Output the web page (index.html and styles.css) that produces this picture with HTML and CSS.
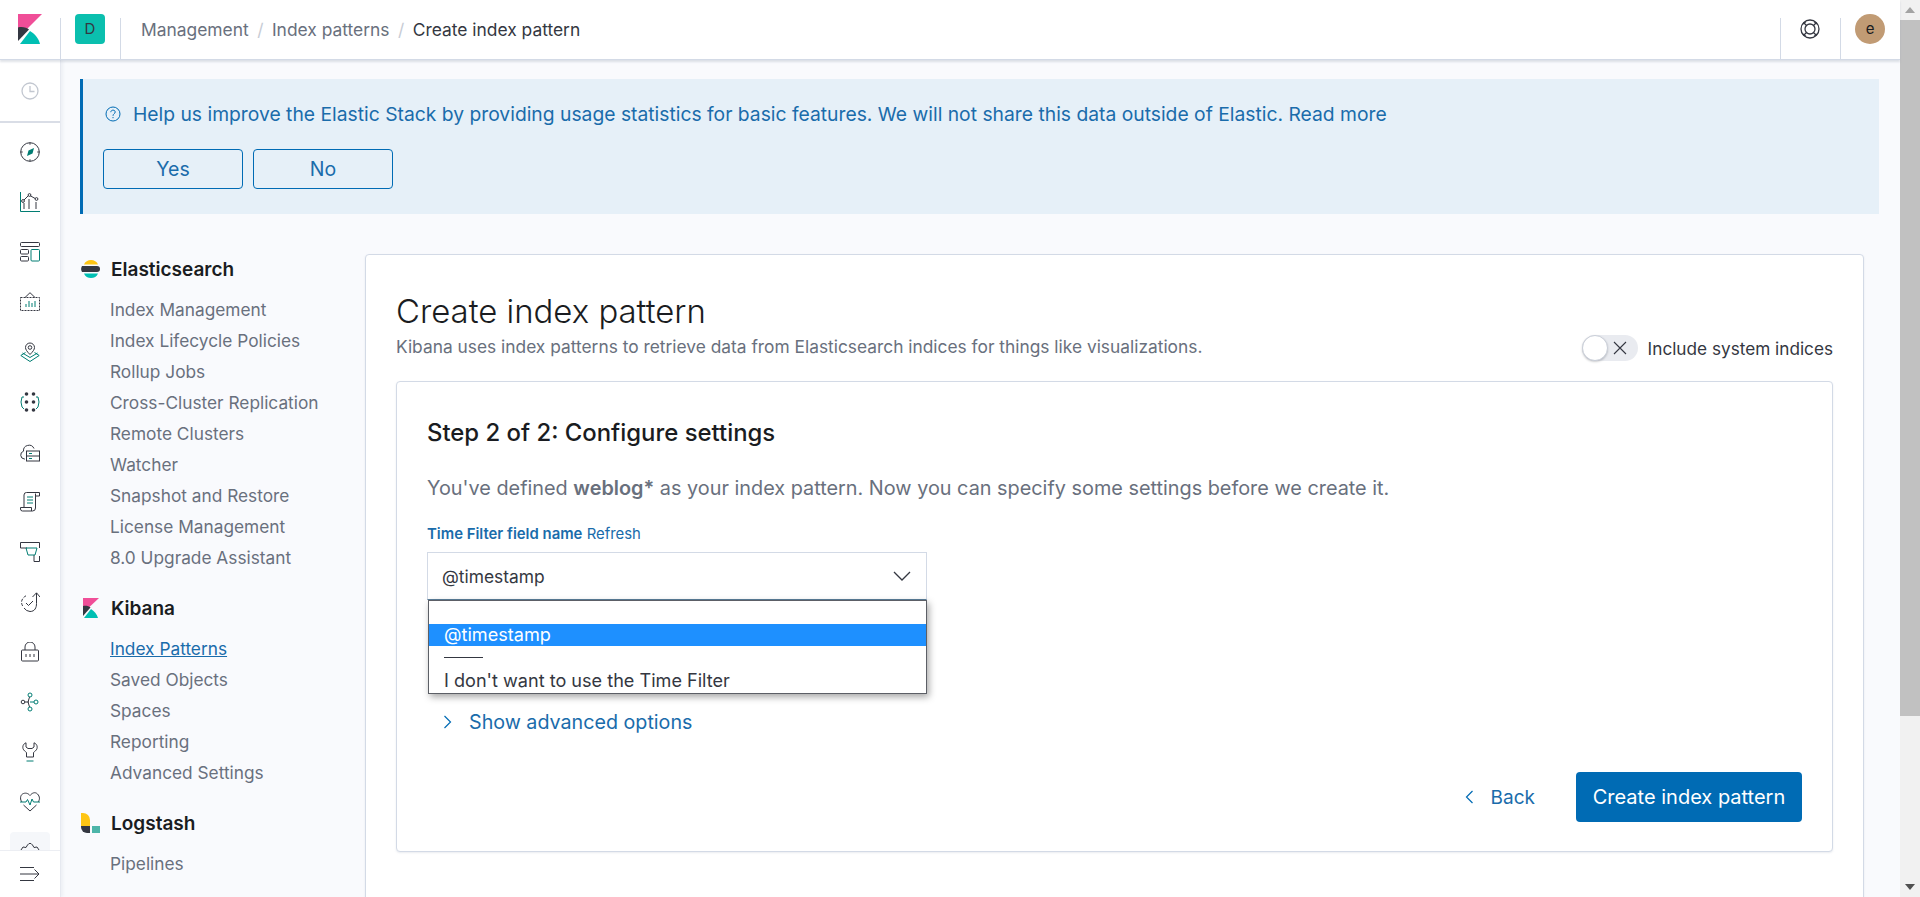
FILE: index.html
```html
<!DOCTYPE html>
<html lang="en">
<head>
    <meta charset="UTF-8">
    <title>Create index pattern</title>
    <link rel="stylesheet" href="styles.css">
</head>
<body>
<div class="page">
    <div class="app">
        <header class="topbar">
            <div class="logo-cell">
                <svg width="24" height="30" viewBox="0 0 24 30"><path fill="#f04e98" d="M0 0h24L0 24z"/><path fill="#343741" d="M0 13.500c4-1 9 0 11 2L0 27z"/><path fill="#00bfb3" d="M2 30l10-13c5 3 9 8 10 13z"/></svg>
            </div>
            <div class="space-cell"><span class="space-badge">D</span></div>
            <nav class="crumbs">
                <span>Management</span><i>/</i><span>Index patterns</span><i>/</i><b>Create index pattern</b>
            </nav>
            <div class="head-cell">
                <svg width="20" height="20" viewBox="0 0 20 20" fill="none" stroke="#343741" stroke-width="1.300"><circle cx="10" cy="10" r="9"/><circle cx="10" cy="10" r="5"/><path d="M3.500 3.500L6.500 6.500M16.500 3.500L13.500 6.500M3.500 16.500L6.500 13.500M16.500 16.500L13.500 13.500M6 2.500L3 5M14 2.500L17 5M6 17.500L3 15M14 17.500L17 15"/></svg>
            </div>
            <div class="head-cell"><span class="avatar">e</span></div>
        </header>
        <div class="below">
            <aside class="rail">
                <div class="recent">
                    <svg width="20" height="20" viewBox="0 0 20 20" fill="none" stroke="#c2c7d0" stroke-width="1.300"><circle cx="10" cy="10" r="8"/><path d="M10 5v5.500h4.500"/></svg>
                </div>
                <div class="rail-items">
                    <a class="rail-item"><svg width="20" height="20" viewBox="0 0 20 20" fill="none"><circle class="ink" cx="10" cy="10" r="9.300"/><path class="ink" d="M10 .700v2M10 17.300v2M.700 10h2M17.300 10h2"/><path fill="#017d73" d="M14 6l-1.500 5.500L7 14l1.500-5.500z"/></svg></a>
                    <a class="rail-item"><svg width="20" height="20" viewBox="0 0 20 20" fill="none"><path class="teal" d="M.500 0v19.500h19.500"/><path class="ink" d="M3 9l6-6 7 4M4 11v6M9 7v10M16 10v7"/><circle class="ink fill" cx="3" cy="9" r="1.400"/><circle class="ink fill" cx="9.500" cy="3" r="1.400"/><circle class="ink fill" cx="16.500" cy="7" r="1.400"/></svg></a>
                    <a class="rail-item"><svg width="20" height="20" viewBox="0 0 20 20" fill="none"><rect class="ink" x=".500" y=".500" width="19" height="4" rx="1"/><rect class="ink" x=".500" y="7.500" width="8" height="4.500" rx="1"/><rect class="ink" x=".500" y="14.500" width="8" height="4.500" rx="1"/><rect class="teal" x="11" y="7.500" width="8.500" height="11.500" rx="1"/></svg></a>
                    <a class="rail-item"><svg width="20" height="20" viewBox="0 0 20 20" fill="none"><path class="ink" stroke-dasharray="2 1" d="M.500 5.500h19v13H.500z"/><path class="ink" d="M5 5.500L10 .700l5 4.800"/><path class="teal" stroke-width="1.500" d="M6 15v-3M9 15V9M12 15v-4M15 15V9"/></svg></a>
                    <a class="rail-item"><svg width="20" height="20" viewBox="0 0 20 20" fill="none"><path class="ink" d="M10 12.500C7 9.500 5.500 7.500 5.500 5.500a4.500 4.500 0 0 1 9 0c0 2-1.500 4-4.500 7z"/><circle class="ink" cx="10" cy="5.500" r="1.800"/><path class="teal" d="M5.500 10.500L.800 13.500 10 19.500l9.200-6-4.700-3"/><path class="teal" d="M2.500 11l7.500 4.500 7.500-4.500"/></svg></a>
                    <a class="rail-item"><svg width="20" height="20" viewBox="0 0 20 20" fill="none"><g fill="#343741"><circle cx="6.500" cy="2" r="1.800"/><circle cx="13.500" cy="2" r="1.800"/><circle cx="6.500" cy="10" r="1.800"/><circle cx="13.500" cy="10" r="1.800"/><circle cx="6.500" cy="18" r="1.800"/><circle cx="13.500" cy="18" r="1.800"/></g><path class="teal" stroke-width="1.300" d="M4 5H2l-1 5 1 5 2 2M16 5h2l1 5-1 5-2 2"/></svg></a>
                    <a class="rail-item"><svg width="20" height="20" viewBox="0 0 20 20" fill="none"><path class="ink" d="M5 17H4.500A4 4 0 0 1 3.500 9.200 5.500 5.500 0 0 1 14 6.500"/><rect class="ink" x="6.500" y="9" width="13" height="10"/><path class="ink" d="M6.500 14h13"/><path class="teal" d="M9 11.500h3M9 16.500h3"/></svg></a>
                    <a class="rail-item"><svg width="20" height="20" viewBox="0 0 20 20" fill="none"><path class="ink" d="M4 15.500V3a2.500 2.500 0 0 1 2.500-2.500H19.500V4H15.500M15.500 1.500V16a3 3 0 0 1-3 3H2.500A2 2 0 0 1 .500 17v-1.500h11V19"/><path class="teal" d="M7 5h6M7 8h6M7 11h6"/></svg></a>
                    <a class="rail-item"><svg width="20" height="20" viewBox="0 0 20 20" fill="none"><path class="ink" d="M7 6H.500V.500h19V6M14 13v6.500H19.500V14"/><path class="teal" d="M6 6h11l-2 7H8z"/></svg></a>
                    <a class="rail-item"><svg width="20" height="20" viewBox="0 0 20 20" fill="none"><path class="ink" stroke-dasharray="3 1.500" d="M6 3.800A8 8 0 0 0 1.500 10 8 8 0 0 0 3 14.500"/><path class="ink" d="M4 16a8 8 0 0 0 6 3.500c5 0 6.500-4 6.500-8V1M12.500 5L16.500 .800 20 5"/><path class="ink" d="M6 11l2.500 2.500L13 9"/></svg></a>
                    <a class="rail-item"><svg width="20" height="20" viewBox="0 0 20 20" fill="none"><rect class="ink" x="1.500" y="8" width="17" height="11" rx="1"/><path class="ink" d="M5 8V5a5 5 0 0 1 10 0v3"/><path class="ink" d="M6 12v3M10 12v3M14 12v3"/></svg></a>
                    <a class="rail-item"><svg width="20" height="20" viewBox="0 0 20 20" fill="none"><path class="ink" d="M4 10h5M10 3.500L8 10l2 6.500"/><circle class="ink fill" cx="3" cy="10" r="1.800"/><circle class="teal fill" cx="10" cy="3" r="2"/><circle class="teal fill" cx="16" cy="10" r="2"/><circle class="teal fill" cx="10" cy="17" r="2"/><path class="teal" d="M10 10h4"/></svg></a>
                    <a class="rail-item"><svg width="20" height="20" viewBox="0 0 20 20" fill="none"><path class="ink" d="M6 .800C3 2 2.500 4.500 3 6.500c.5 2 2.500 3 3.500 4v4.500h7V10.500c1-1 3-2 3.500-4 .5-2 0-4.500-3-5.700V5l-2 1.500H8L6 5z"/><path class="teal" stroke-width="1.300" d="M6.500 19h7"/></svg></a>
                    <a class="rail-item"><svg width="20" height="20" viewBox="0 0 20 20" fill="none"><path class="ink" d="M2 10C0 8 0 3.500 2.500 2c2.500-1.500 5.500-1 7.500 1.500C12 1 15-.500 17.500 2c2.500 2.500 2.500 6 .5 8M3.500 13l6.500 6 6.500-6"/><path class="teal" d="M0 10h6l1.500-2.500L10 13l2-6 1.500 3H20"/></svg></a>
                    <a class="rail-item current"><svg width="20" height="20" viewBox="0 0 20 20" fill="none"><path class="ink" d="M1 8l2-3 3 .500L7.500 3 9 1.500h2L12.500 3 14 5.500l3-.500 2 3"/></svg></a>
                </div>
                <div class="collapse">
                    <svg width="20" height="16" viewBox="0 0 20 16" fill="none"><path class="ink" d="M0 1.500h14M0 8h19M0 14.500h14M14.500 3.500L19 8l-4.500 4.500"/></svg>
                </div>
            </aside>
            <main class="content">
                <div class="callout">
                    <p class="callout-title">
                        <svg width="16" height="16" viewBox="0 0 16 16" fill="none" stroke="#006bb4" stroke-width="1"><circle cx="8" cy="8" r="7"/><path d="M5.800 6.200C5.800 3.500 10.200 3.500 10.200 6c0 1.800-2.200 1.700-2.200 3.800"/><path d="M8 11v1.200"/></svg>
                        Help us improve the Elastic Stack by providing usage statistics for basic features. We will not share this data outside of Elastic. Read more
                    </p>
                    <div class="callout-btns">
                        <button class="btn-line">Yes</button>
                        <button class="btn-line">No</button>
                    </div>
                </div>
                <div class="mgmt">
                    <nav class="side">
                        <h3 class="side-title">
                            <svg class="side-icon" width="20" height="18" viewBox="0 0 20 18"><path fill="#fec514" d="M3 4.500C4 1.500 7 0 10 0s6 1.500 7 4.500z"/><path fill="#343741" d="M1 6h15a3 3 0 0 1 0 6H1a6 6 0 0 1 0-6z"/><path fill="#00bfb3" d="M3 13.500h14C16 16.500 13 18 10 18s-6-1.500-7-4.500z"/></svg>
                            Elasticsearch
                        </h3>
                        <ul class="side-list">
                            <li>Index Management</li>
                            <li>Index Lifecycle Policies</li>
                            <li>Rollup Jobs</li>
                            <li>Cross-Cluster Replication</li>
                            <li>Remote Clusters</li>
                            <li>Watcher</li>
                            <li>Snapshot and Restore</li>
                            <li>License Management</li>
                            <li>8.0 Upgrade Assistant</li>
                        </ul>
                        <h3 class="side-title">
                            <svg class="side-icon" width="20" height="20" viewBox="0 0 16 20"><path fill="#f04e98" d="M0 0h16L0 15z"/><path fill="#343741" d="M0 8c3-.500 6 0 7.500 1.500L0 18z"/><path fill="#00bfb3" d="M1 20l7-9c3 2 6 5 7 9z"/></svg>
                            Kibana
                        </h3>
                        <ul class="side-list">
                            <li class="active">Index Patterns</li>
                            <li>Saved Objects</li>
                            <li>Spaces</li>
                            <li>Reporting</li>
                            <li>Advanced Settings</li>
                        </ul>
                        <h3 class="side-title">
                            <svg class="side-icon" width="20" height="20" viewBox="0 0 20 20"><path fill="#fec514" d="M0 0h2a7 7 0 0 1 7 7v6H0z"/><path fill="#343741" d="M0 13h9v7H6a6 6 0 0 1-6-6z"/><rect fill="#4db5a9" x="11" y="13" width="8" height="7"/></svg>
                            Logstash
                        </h3>
                        <ul class="side-list">
                            <li>Pipelines</li>
                        </ul>
                    </nav>
                    <section class="panel">
                        <div class="panel-head">
                            <div>
                                <h1 class="panel-title">Create index pattern</h1>
                                <p class="panel-sub">Kibana uses index patterns to retrieve data from Elasticsearch indices for things like visualizations.</p>
                            </div>
                            <div class="switch-wrap">
                                <span class="switch">
                                    <span class="knob"></span>
                                    <svg width="14" height="14" viewBox="0 0 14 14" fill="none" stroke="#343741" stroke-width="1.100"><path d="M1 1l12 12M13 1L1 13"/></svg>
                                </span>
                                Include system indices
                            </div>
                        </div>
                        <div class="step">
                            <h2 class="step-title">Step 2 of 2: Configure settings</h2>
                            <p class="step-text">You've defined <b>weblog*</b> as your index pattern. Now you can specify some settings before we create it.</p>
                            <div class="field-label"><b>Time Filter field name</b> <a>Refresh</a></div>
                            <div class="select-wrap">
                                <div class="select">
                                    @timestamp
                                    <svg width="18" height="10" viewBox="0 0 18 10" fill="none" stroke="#343741" stroke-width="1.300"><path d="M1 1l8 8 8-8"/></svg>
                                </div>
                                <ul class="dropdown">
                                    <li class="blank"></li>
                                    <li class="picked">@timestamp</li>
                                    <li class="sep"><span></span></li>
                                    <li class="plain">I don't want to use the Time Filter</li>
                                </ul>
                            </div>
                            <a class="advanced">
                                <svg width="10" height="16" viewBox="0 0 10 16" fill="none" stroke="#006bb4" stroke-width="1.200"><path d="M1.500 2l6 6-6 6"/></svg>
                                Show advanced options
                            </a>
                            <div class="step-foot">
                                <a class="back">
                                    <svg width="10" height="16" viewBox="0 0 10 16" fill="none" stroke="#006bb4" stroke-width="1.200"><path d="M8.500 2l-6 6 6 6"/></svg>
                                    Back
                                </a>
                                <button class="btn-fill">Create index pattern</button>
                            </div>
                        </div>
                    </section>
                </div>
            </main>
        </div>
    </div>
    <div class="scrollbar">
        <span class="arrow up"></span>
        <span class="thumb"></span>
        <span class="arrow down"></span>
    </div>
</div>
</body>
</html>
```

FILE: styles.css
```css
* {
    box-sizing: border-box;
}

html, body {
    margin: 0;
    height: 100%;
    overflow: hidden;
}

body {
    font-family: Inter, "Liberation Sans", sans-serif;
    font-size: 17.2px;
    color: #343741;
    background-color: #f9fafd;
}

h1, h2, h3, p, ul {
    margin: 0;
    padding: 0;
    list-style: none;
}

.page {
    display: flex;
    height: 897px;
}

.app {
    flex: 1;
    min-width: 0;
    display: flex;
    flex-direction: column;
}

/* top bar */
.topbar {
    height: 60px;
    flex: none;
    display: flex;
    align-items: stretch;
    background-color: #fff;
    border-bottom: 1px solid #d3dae6;
    box-shadow: 0 2px 2px rgba(152, 162, 179, 0.3);
    position: relative;
    z-index: 2;
}

.logo-cell {
    width: 60px;
    display: flex;
    align-items: center;
    justify-content: center;
    padding-bottom: 1px;
}

.space-cell {
    width: 60px;
    display: flex;
    align-items: center;
    justify-content: center;
    padding-bottom: 1px;
    background: linear-gradient(#d3dae6, #d3dae6) left 18px / 1px 100% no-repeat;
}

.space-badge {
    width: 30px;
    height: 30px;
    border-radius: 4px;
    background-color: #0bbfae;
    color: #343741;
    font-size: 15px;
    line-height: 30px;
    text-align: center;
}

.crumbs {
    flex: 1;
    display: flex;
    align-items: center;
    padding-left: 21px;
    padding-bottom: 1px;
    font-size: 17.4px;
    color: #69707d;
    background: linear-gradient(#d3dae6, #d3dae6) left 18px / 1px 100% no-repeat;
}

.crumbs i {
    font-style: normal;
    color: #c7ccd5;
    margin: 0 8.500px;
}

.crumbs b {
    font-weight: 400;
    color: #343741;
}

.head-cell {
    width: 60px;
    display: flex;
    align-items: center;
    justify-content: center;
    padding-bottom: 1px;
    background: linear-gradient(#d3dae6, #d3dae6) left 18px / 1px 100% no-repeat;
}

.avatar {
    width: 30px;
    height: 30px;
    border-radius: 50%;
    background-color: #c19b74;
    color: #1a1c21;
    font-size: 15px;
    line-height: 30px;
    text-align: center;
}

.below {
    flex: 1;
    min-height: 0;
    display: flex;
}

/* icon rail */
.rail {
    width: 61px;
    flex: none;
    display: flex;
    flex-direction: column;
    background-color: #fff;
    border-right: 1px solid #e6e9f0;
    box-shadow: 2px 0 3px rgba(152, 162, 179, 0.12);
}

.recent {
    height: 63px;
    flex: none;
    display: flex;
    align-items: center;
    justify-content: center;
    border-bottom: 2px solid #d9dde6;
}

.rail-items {
    flex: 1;
    min-height: 0;
    overflow: hidden;
    padding-top: 4px;
}

.rail-item {
    height: 50px;
    display: flex;
    align-items: center;
    justify-content: center;
    margin: 0 10px;
    border-radius: 4px;
}

.rail-item.current {
    height: 40px;
    margin: 5px 10px;
    background-color: #f5f7fa;
}

.ink {
    stroke: #343741;
    stroke-width: 1;
}

.teal {
    stroke: #017d73;
    stroke-width: 1;
}

.fill {
    fill: #fff;
}

.collapse {
    height: 47px;
    flex: none;
    display: flex;
    align-items: center;
    justify-content: center;
    border-top: 1px solid #eceef3;
    background-color: #fff;
}

/* main area */
.content {
    flex: 1;
    min-width: 0;
    overflow: hidden;
    padding: 19px 21px 0 19px;
}

.callout {
    height: 135px;
    padding: 23px 20px 0 20px;
    background-color: #e6f0f8;
    border-left: 3px solid #006bb4;
}

.callout-title {
    display: flex;
    align-items: center;
    gap: 12px;
    height: 24px;
    padding-left: 2px;
    font-size: 19.3px;
    color: #1a6cab;
}

.callout-btns {
    display: flex;
    gap: 10px;
    margin-top: 23px;
}

.btn-line {
    width: 140px;
    height: 40px;
    border: 1px solid #006bb4;
    border-radius: 4px;
    background: transparent;
    color: #1a6cab;
    font: inherit;
    font-size: 19.5px;
}

.mgmt {
    display: flex;
    margin-top: 40px;
    align-items: flex-start;
}

.side {
    width: 285px;
    flex: none;
}

.side-title {
    display: flex;
    align-items: center;
    height: 30px;
    font-size: 19px;
    font-weight: 600;
    color: #1a1c21;
}

.side-icon {
    flex: none;
    margin: 0 10px 0 1px;
}

.side-list {
    margin: 10px 0 20px 30px;
}

.side-list li {
    height: 31px;
    line-height: 31px;
    font-size: 17.3px;
    color: #69707d;
}

.side-list li.active {
    color: #1a6cab;
    text-decoration: underline;
}

.panel {
    flex: 1;
    height: 700px;
    margin-right: 15px;
    padding: 36px 30px 0 30px;
    background-color: #fff;
    border: 1px solid #d3dae6;
    border-radius: 4px;
    box-shadow: 0 1px 2px rgba(152, 162, 179, 0.2);
}

.panel-head {
    display: flex;
    justify-content: space-between;
    align-items: flex-end;
}

.panel-title {
    font-size: 32.9px;
    font-weight: 300;
    line-height: 40px;
    color: #1a1c21;
}

.panel-sub {
    margin-top: 4px;
    padding-bottom: 2px;
    line-height: 24px;
    font-size: 17.35px;
    color: #69707d;
}

.switch-wrap {
    display: flex;
    align-items: center;
    gap: 10px;
}

.switch {
    width: 56px;
    height: 26px;
    display: flex;
    align-items: center;
    justify-content: flex-end;
    padding-right: 11px;
    border-radius: 13px;
    background-color: #e9ebf0;
    position: relative;
}

.knob {
    position: absolute;
    left: 0;
    top: 0;
    width: 26px;
    height: 26px;
    border-radius: 50%;
    background-color: #fff;
    border: 1px solid #c9ced8;
    box-shadow: 0 1px 2px rgba(52, 55, 65, 0.25);
}

.step {
    margin-top: 20px;
    height: 471px;
    padding: 35px 30px 0 30px;
    background-color: #fff;
    border: 1px solid #d3dae6;
    border-radius: 4px;
    box-shadow: 0 1px 2px rgba(152, 162, 179, 0.2);
}

.step-title {
    font-size: 23.9px;
    font-weight: 500;
    line-height: 32px;
    color: #1a1c21;
}

.step-text {
    margin-top: 25px;
    font-size: 19.85px;
    line-height: 28px;
    color: #69707d;
}

.step-text b {
    font-weight: 600;
}

.field-label {
    margin-top: 22px;
    font-size: 14.9px;
    line-height: 20px;
    color: #1a6cab;
}

.field-label b {
    font-weight: 600;
}

.select-wrap {
    position: relative;
    width: 500px;
    margin-top: 8px;
}

.select {
    height: 48px;
    display: flex;
    align-items: center;
    justify-content: space-between;
    padding: 0 15px 0 14px;
    font-size: 17.4px;
    background-color: #fff;
    border: 1px solid #d3dae6;
    border-bottom: 1px solid #5b7f9b;
}

.dropdown {
    position: absolute;
    top: 100%;
    left: 1px;
    width: 499px;
    height: 94px;
    font-size: 18.1px;
    background-color: #fff;
    border: 1px solid #5c5f66;
    box-shadow: 2px 3px 7px rgba(0, 0, 0, 0.35);
    z-index: 1;
}

.dropdown li {
    height: 24px;
    line-height: 24px;
    padding-left: 15px;
}

.dropdown .blank {
    height: 23px;
}

.dropdown .picked {
    height: 22px;
    line-height: 20px;
    background-color: #1e90ff;
    color: #fff;
}

.dropdown .sep {
    height: 22px;
    padding-top: 11px;
}

.dropdown .sep span {
    display: block;
    width: 39px;
    height: 1px;
    background-color: #343741;
}

.advanced {
    display: flex;
    align-items: center;
    gap: 16px;
    margin-top: 110px;
    padding-left: 16px;
    font-size: 19.7px;
    line-height: 24px;
    color: #1a6cab;
}

.step-foot {
    display: flex;
    justify-content: flex-end;
    align-items: center;
    margin-top: 38px;
}

.back {
    display: flex;
    align-items: center;
    gap: 17px;
    margin-right: 41px;
    font-size: 19px;
    color: #1a6cab;
}

.btn-fill {
    width: 226px;
    height: 50px;
    border: none;
    border-radius: 4px;
    background-color: #006bb4;
    color: #fff;
    font: inherit;
    font-size: 20px;
}

/* page scrollbar */
.scrollbar {
    width: 20px;
    flex: none;
    display: flex;
    flex-direction: column;
    align-items: center;
    background-color: #f1f1f1;
}

.arrow {
    height: 20px;
    flex: none;
    width: 0;
    border-left: 5px solid transparent;
    border-right: 5px solid transparent;
}

.arrow.up {
    border-top: 7px solid transparent;
    border-bottom: 6px solid #a3a3a3;
    height: 13px;
    margin-bottom: 7px;
}

.arrow.down {
    border-top: 6px solid #505050;
    border-bottom: 0;
    height: 6px;
    margin: auto 0 7px;
}

.thumb {
    width: 100%;
    height: 696px;
    flex: none;
    background-color: #c1c1c1;
}
```
